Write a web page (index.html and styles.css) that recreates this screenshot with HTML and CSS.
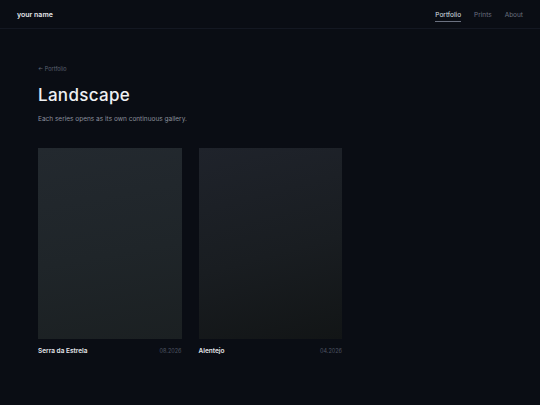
FILE: index.html
```html
<!DOCTYPE html>
<html lang="en">
  <head>
    <meta charset="utf-8">
    <title>Landscape</title>
    <link rel="stylesheet" href="styles.css">
  </head>
  <body>
    <header class="topbar">
      <a class="brand" href="#">your name</a>
      <nav class="nav">
        <a class="active" href="#">Portfolio</a>
        <a href="#">Prints</a>
        <a href="#">About</a>
      </nav>
    </header>

    <main class="page">
      <a class="back" href="#">← Portfolio</a>
      <h1>Landscape</h1>
      <p class="lead">Each series opens as its own continuous gallery.</p>

      <div class="grid">
        <a class="series" href="#">
          <div class="thumb one"></div>
          <div class="caption">
            <span class="title">Serra da Estrela</span>
            <span class="date">08.2026</span>
          </div>
        </a>
        <a class="series" href="#">
          <div class="thumb two"></div>
          <div class="caption">
            <span class="title">Alentejo</span>
            <span class="date">04.2026</span>
          </div>
        </a>
      </div>
    </main>
  </body>
</html>
```

FILE: styles.css
```css
html {
  background: #0a0d14;
}

body {
  margin: 0;
  font-family: 'Inter', 'Liberation Sans', sans-serif;
  color: #e6e8ec;
}

a,
a:visited {
  color: #e6e8ec;
  text-decoration: none;
}

.topbar {
  display: flex;
  justify-content: space-between;
  align-items: center;
  height: 28px;
  padding: 0 17px;
  border-bottom: 1px solid #141822;
}

.brand {
  font-size: 7px;
  font-weight: 600;
}

.nav {
  display: flex;
  gap: 13px;
}

.nav a {
  font-size: 6.5px;
  color: #6b7180;
  padding: 4px 0 2px;
  border-bottom: 1px solid transparent;
}

.nav a.active {
  color: #dfe2e8;
  border-bottom-color: #6b7180;
}

.page {
  padding: 37px 38px 0;
}

.back {
  display: block;
  font-size: 5.5px;
}

.page .back {
  color: #5d6373;
}

h1 {
  margin: 13px 0 0;
  font-size: 17px;
  font-weight: 500;
  letter-spacing: 0.3px;
  color: #eef0f3;
}

.lead {
  margin: 10px 0 0;
  font-size: 6.5px;
  color: #8a8f9c;
}

.grid {
  display: grid;
  grid-template-columns: 143.5px 143.5px;
  gap: 17px;
  margin-top: 25px;
}

.thumb {
  height: 191px;
}

.thumb.one {
  background: linear-gradient(170deg, #23292f 0%, #1f2529 55%, #1b2022 100%);
}

.thumb.two {
  background: linear-gradient(165deg, #1f232b 0%, #191d21 55%, #121516 100%);
}

.caption {
  display: flex;
  justify-content: space-between;
  align-items: baseline;
  margin-top: 8px;
}

.title {
  font-size: 6.5px;
  font-weight: 600;
  color: #e4e6ea;
}

.date {
  font-size: 5.5px;
  color: #4e5463;
}
```
